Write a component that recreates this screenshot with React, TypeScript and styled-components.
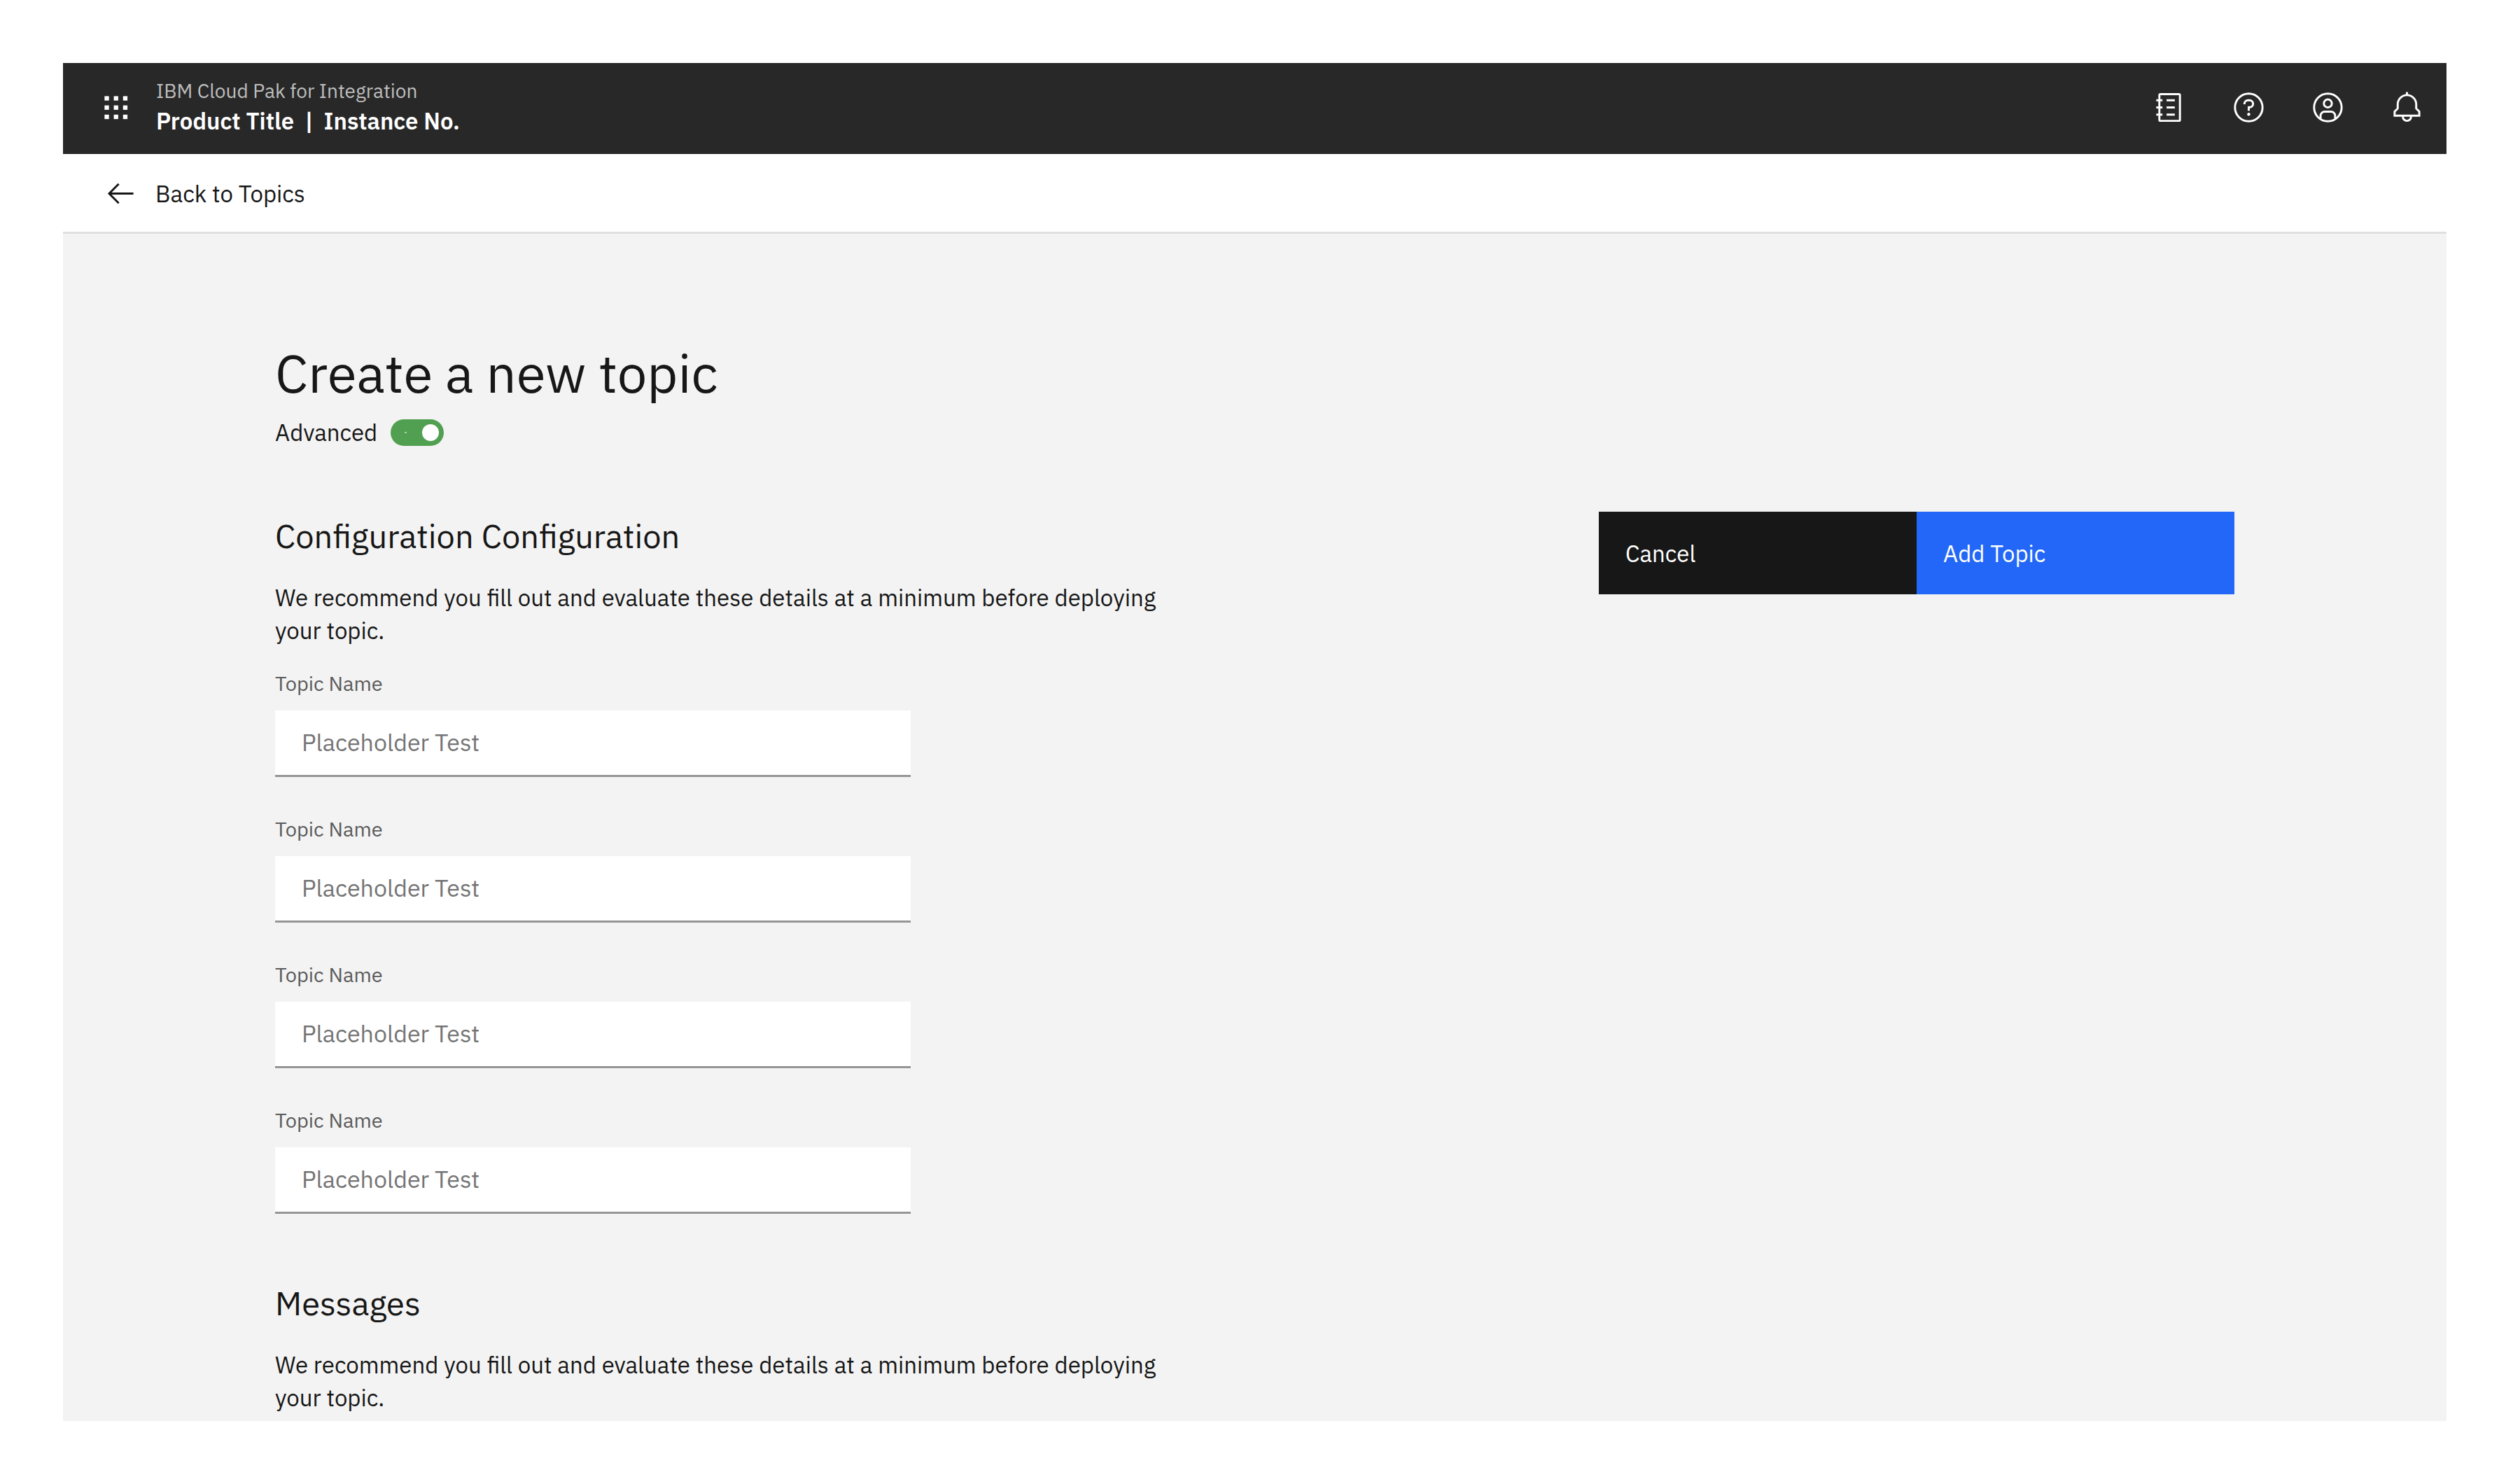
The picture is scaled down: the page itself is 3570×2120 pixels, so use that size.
import React from "react";
import styled, { createGlobalStyle } from "styled-components";

const GlobalStyle = createGlobalStyle`
  * { box-sizing: border-box; }
  body { margin: 0; background: #ffffff; font-family: "IBM Plex Sans", Roboto, "Liberation Sans", sans-serif; color: #171717; }
  h1, h2, p { margin: 0; font-weight: 400; }
  button, input { font: inherit; }
`;

const Frame = styled.div`
  margin: 90px 75px 90px 90px;
  background: #f3f3f3;
`;

const Header = styled.header`
  display: flex;
  align-items: center;
  height: 130px;
  padding: 0 0 3px 52px;
  background: #282828;
  color: #ffffff;
`;

const IconButton = styled.button<{ $width: number }>`
  display: flex;
  align-items: center;
  justify-content: center;
  width: ${(p) => p.$width}px;
  height: 100%;
  padding: 0;
  border: 0;
  background: transparent;
  color: inherit;
`;

const Brand = styled.div`
  flex: 1;
  padding: 0 0 6px 34px;
`;

const BrandName = styled.div`
  font-size: 28px;
  line-height: 43px;
  color: #bebebe;
`;

const ProductName = styled.div`
  display: flex;
  gap: 15px;
  font-size: 33px;
  line-height: 43px;
  font-weight: 600;
`;

const Actions = styled.nav`
  display: flex;
  height: 100%;
`;

const BackBar = styled.nav`
  display: flex;
  align-items: center;
  height: 114px;
  padding: 2px 0 0 58px;
  background: #ffffff;
  border-bottom: 3px solid #e0e0e0;
`;

const BackLink = styled.a`
  display: flex;
  align-items: center;
  gap: 27px;
  font-size: 33px;
  line-height: 47px;
  color: inherit;
  text-decoration: none;
`;

const Content = styled.main`
  padding: 149px 303px 10px;
`;

const Title = styled.h1`
  font-size: 76px;
  line-height: 100px;
`;

const ToggleLabel = styled.label`
  display: flex;
  align-items: center;
  gap: 19px;
  width: fit-content;
  margin-top: 11px;
  font-size: 33px;
  line-height: 47px;
`;

const Toggle = styled.input`
  appearance: none;
  display: flex;
  align-items: center;
  width: 76px;
  height: 38px;
  margin: 0;
  padding: 0 7px;
  border-radius: 19px;
  background: #8d8d8d;
  &::after {
    content: "";
    width: 24px;
    height: 24px;
    border-radius: 50%;
    background: #ffffff;
  }
  &:checked {
    justify-content: space-between;
    background: #51a051;
  }
  &:checked::before {
    content: "";
    width: 3px;
    height: 2px;
    margin-left: 13px;
    background: #a8cfa8;
  }
`;

const Columns = styled.div`
  display: flex;
  align-items: flex-start;
  justify-content: space-between;
  padding-top: 90px;
`;

const Form = styled.form`
  display: flex;
  flex-direction: column;
  gap: 93px;
`;

const Section = styled.section`
  max-width: 1300px;
`;

const SectionTitle = styled.h2`
  font-size: 47px;
  line-height: 70px;
`;

const Description = styled.p`
  padding-top: 29px;
  font-size: 33px;
  line-height: 47px;
`;

const Fields = styled.div`
  display: flex;
  flex-direction: column;
  gap: 56px;
  width: 908px;
  padding-top: 34px;
`;

const Field = styled.label`
  display: flex;
  flex-direction: column;
  gap: 21px;
  font-size: 29px;
  line-height: 36px;
  color: #5a5a5a;
`;

const TextInput = styled.input`
  height: 95px;
  padding: 0 38px 2px;
  border: 0;
  border-bottom: 3px solid #959595;
  border-radius: 0;
  background: #ffffff;
  font-size: 34px;
  color: #171717;
  &::placeholder { color: #757575; opacity: 1; }
`;

const ButtonSet = styled.div`
  display: flex;
`;

const ActionButton = styled.button<{ $primary?: boolean }>`
  width: 454px;
  height: 118px;
  padding: 0 38px;
  border: 0;
  background: ${(p) => (p.$primary ? "#2267f7" : "#171717")};
  color: #ffffff;
  font-size: 33px;
  text-align: left;
`;

const FIELDS = ["topic-1", "topic-2", "topic-3", "topic-4"];
const DESCRIPTION =
  "We recommend you fill out and evaluate these details at a minimum before deploying your topic.";

const Icon = ({ children }: { children: React.ReactNode }) => (
  <svg width="47" height="47" viewBox="0 0 32 32" fill="currentColor" aria-hidden="true">
    {children}
  </svg>
);

export default function App() {
  return (
    <>
      <GlobalStyle />
      <Frame>
        <Header>
          <IconButton $width={47} aria-label="Switcher">
            <Icon>
              {[5, 14, 23].map((x) => [5, 14, 23].map((y) => (
                <rect key={x + "-" + y} x={x} y={y} width="4.3" height="4.3" />
              )))}
            </Icon>
          </IconButton>
          <Brand>
            <BrandName>IBM Cloud Pak for Integration</BrandName>
            <ProductName>
              <span>Product Title</span>
              <span>|</span>
              <span>Instance No.</span>
            </ProductName>
          </Brand>
          <Actions>
            <IconButton $width={113} aria-label="Documentation">
              <Icon>
                <g fill="none" stroke="currentColor" strokeWidth="2">
                  <rect x="6" y="3" width="20" height="26" rx="1" />
                  <path d="M3 9h6M3 16h6M3 23h6M13 9h8M13 16h8M13 23h8" />
                </g>
              </Icon>
            </IconButton>
            <IconButton $width={113} aria-label="Help">
              <Icon>
                <g fill="none" stroke="currentColor" strokeWidth="2">
                  <circle cx="16" cy="16" r="13.4" />
                  <path d="M11.8 13v-.6a3.4 3.4 0 0 1 3.4-3.4h1.6a3.4 3.4 0 0 1 0 6.8H16v3.5" />
                </g>
                <circle cx="16" cy="22.6" r="1.5" />
              </Icon>
            </IconButton>
            <IconButton $width={113} aria-label="Account">
              <Icon>
                <g fill="none" stroke="currentColor" strokeWidth="2">
                  <circle cx="16" cy="16" r="13.4" />
                  <circle cx="16" cy="12.1" r="3.9" />
                  <path d="M8.9 27v-2.9a4 4 0 0 1 4-4h6.2a4 4 0 0 1 4 4v2.9" />
                </g>
              </Icon>
            </IconButton>
            <IconButton $width={113} aria-label="Notifications">
              <Icon>
                <path d="M28.7 19.3 26 16.6V13a10 10 0 0 0-9-9.95V1h-2v2.05A10 10 0 0 0 6 13v3.6l-2.7 2.7A1 1 0 0 0 3 20v5h8a5 5 0 0 0 10 0h8v-5a1 1 0 0 0-.3-.7ZM19 25a3 3 0 0 1-6 0Zm8-2H5v-2.6l2.7-2.7A1 1 0 0 0 8 17v-4a8 8 0 0 1 16 0v4a1 1 0 0 0 .3.7L27 20.4Z" />
              </Icon>
            </IconButton>
          </Actions>
        </Header>
        <BackBar>
          <BackLink href="#topics">
            <Icon>
              <path d="M14 26l1.4-1.4L7.8 17H29v-2H7.8l7.6-7.6L14 6 4 16z" />
            </Icon>
            Back to Topics
          </BackLink>
        </BackBar>
        <Content>
          <Title>Create a new topic</Title>
          <ToggleLabel>
            Advanced
            <Toggle type="checkbox" role="switch" defaultChecked />
          </ToggleLabel>
          <Columns>
            <Form>
              <Section>
                <SectionTitle>Configuration Configuration</SectionTitle>
                <Description>{DESCRIPTION}</Description>
                <Fields>
                  {FIELDS.map((id) => (
                    <Field key={id} htmlFor={id}>
                      Topic Name
                      <TextInput id={id} type="text" placeholder="Placeholder Test" />
                    </Field>
                  ))}
                </Fields>
              </Section>
              <Section>
                <SectionTitle>Messages</SectionTitle>
                <Description>{DESCRIPTION}</Description>
              </Section>
            </Form>
            <ButtonSet>
              <ActionButton type="button">Cancel</ActionButton>
              <ActionButton type="button" $primary>Add Topic</ActionButton>
            </ButtonSet>
          </Columns>
        </Content>
      </Frame>
    </>
  );
}
